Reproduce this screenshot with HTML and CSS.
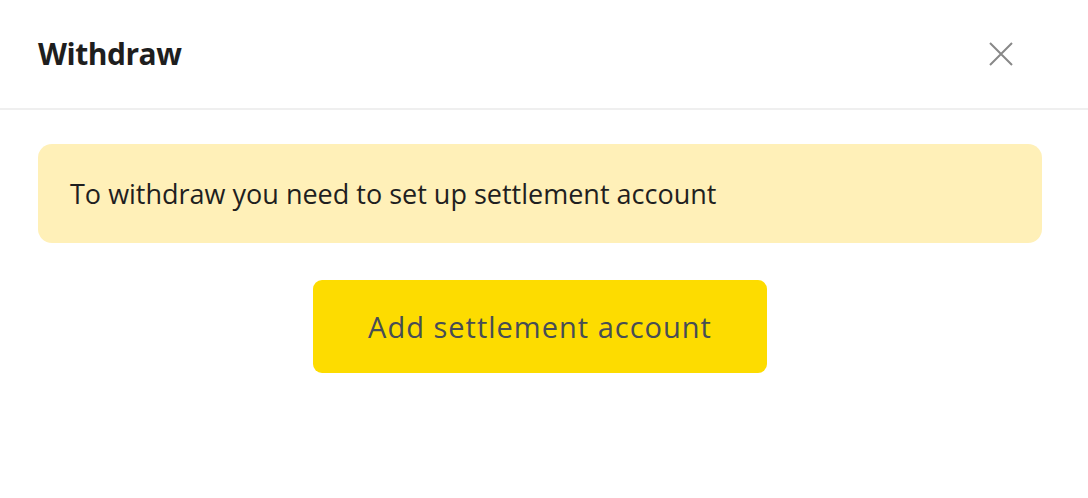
FILE: index.html
```html
<!DOCTYPE html>
<html>
<head>
<meta charset="utf-8">
<link rel="stylesheet" href="styles.css">
</head>
<body>
<div class="modal">
  <header class="modal-header">
    <h1 class="title">Withdraw</h1>
    <button class="close" aria-label="Close">
      <svg width="24" height="24" viewBox="0 0 24 24"><path d="M1 1 L23 23 M23 1 L1 23" stroke="#888" stroke-width="2" fill="none"/></svg>
    </button>
  </header>
  <div class="modal-body">
    <div class="notice">To withdraw you need to set up settlement account</div>
    <div class="actions">
      <button class="primary">Add settlement account</button>
    </div>
  </div>
</div>
</body>
</html>
```
FILE: styles.css
```css
* { box-sizing: border-box; }
html, body { margin: 0; padding: 0; background: #fff; }
body { font-family: "Open Sans", "Noto Sans", sans-serif; color: #1f1f1f; }
.modal { width: 1088px; height: 498px; }
.modal-header {
  height: 110px;
  display: flex;
  align-items: center;
  justify-content: space-between;
  padding: 0 75px 1px 38px;
  border-bottom: 2px solid #efefef;
}
.title { margin: 0; font-size: 30px; font-weight: 700; color: #1e1e1e; letter-spacing: -0.5px; line-height: 1; }
.close { background: none; border: 0; padding: 0; width: 24px; height: 24px; display: flex; cursor: pointer; }
.modal-body { padding: 34px 46px 0 38px; }
.notice {
  background: #fff0b8;
  border-radius: 14px;
  height: 99px;
  display: flex;
  align-items: center;
  padding: 0 32px;
  font-size: 27px;
  color: #1f1f1f;
}
.actions { display: flex; justify-content: center; margin-top: 37px; }
.primary {
  width: 454px;
  height: 93px;
  background: #fddc00;
  border: 0;
  border-radius: 9px;
  font-family: inherit;
  font-size: 29px;
  letter-spacing: 1px;
  color: #474d55;
}
```
